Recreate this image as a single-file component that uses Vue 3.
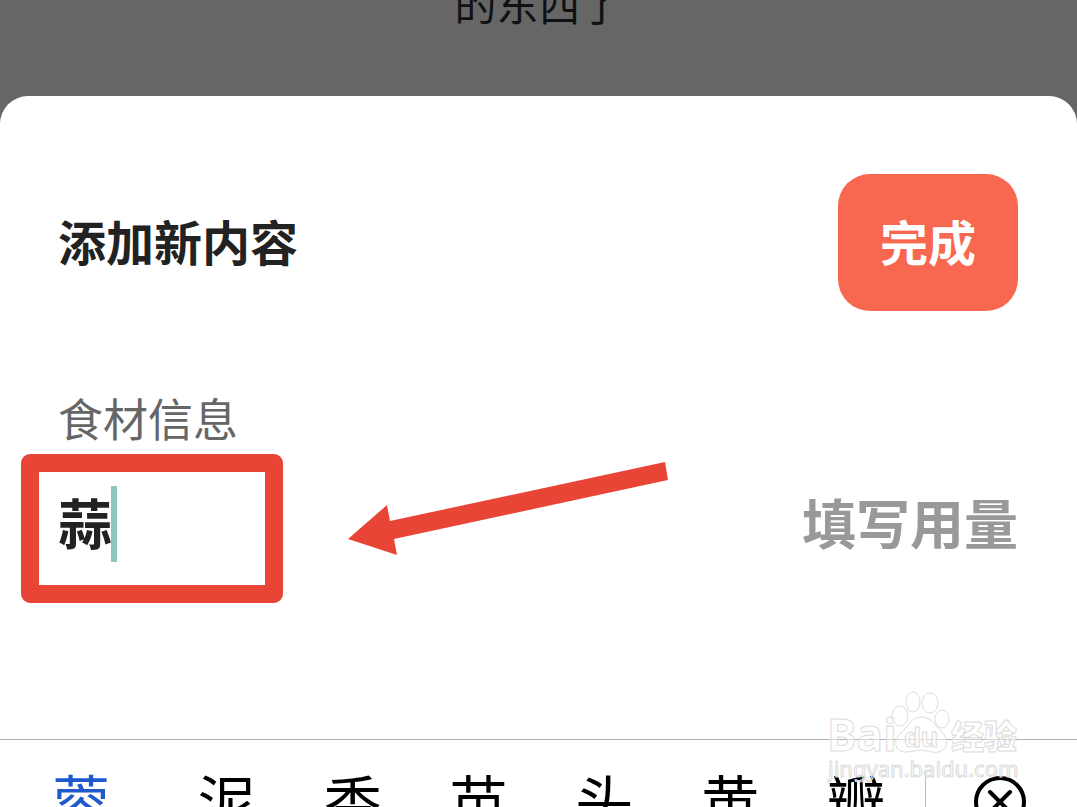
<script setup>
import { ref } from 'vue'

const ingredient = ref('蒜')
const amount = ref('')
const candidates = ['蓉', '泥', '香', '苗', '头', '黄', '瓣']
</script>

<template>
  <div class="screen">
    <p class="backdrop-text">的东西了</p>

    <main class="sheet">
      <header class="sheet-head">
        <h1>添加新内容</h1>
        <button type="button" class="done">完成</button>
      </header>

      <form class="fields" @submit.prevent>
        <label class="caption" for="ingredient">食材信息</label>
        <div class="field-row">
          <div class="ingredient">
            <input id="ingredient" v-model="ingredient" type="text" autocomplete="off" />
            <span class="caret"></span>
            <span class="marker"></span>
            <svg class="arrow" viewBox="0 0 320 94" aria-hidden="true">
              <path d="M0 77 39 43 42 59 317 0 320 18 46 77 49 93Z" fill="#e94537" />
            </svg>
          </div>
          <input v-model="amount" class="amount" type="text" placeholder="填写用量" aria-label="填写用量" />
        </div>
      </form>
    </main>

    <section class="candidates">
      <div class="words">
        <button v-for="(word, i) in candidates" :key="word" type="button" class="word" :class="{ active: i === 0 }">
          {{ word }}
        </button>
      </div>
      <button type="button" class="clear" aria-label="清除">
        <svg viewBox="0 0 52 52" aria-hidden="true">
          <circle cx="26" cy="26" r="24" />
          <path d="M16 16 36 36M36 16 16 36" />
        </svg>
      </button>
    </section>

    <svg class="watermark" viewBox="0 0 200 96" aria-hidden="true">
      <g class="wm-shape">
        <ellipse cx="73" cy="25" rx="8" ry="10" />
        <ellipse cx="86" cy="11" rx="7" ry="10" />
        <ellipse cx="103" cy="12" rx="8" ry="10" />
        <ellipse cx="115" cy="28" rx="7" ry="9" />
        <path d="M94 26C84 26 82 35 76 40C66 48 66 60 78 61C85 61 89 59 95 59C102 60 108 63 114 60C123 56 120 46 114 40C107 34 105 26 94 26Z" />
      </g>
      <text x="0" y="60" class="wm-brand">Bai</text>
      <text x="77" y="56" class="wm-du">du</text>
      <text x="124" y="58" class="wm-cjk">经验</text>
      <text x="1" y="86" class="wm-url">jingyan.baidu.com</text>
    </svg>
  </div>
</template>

<style>
body {
  margin: 0;
}
</style>

<style scoped>
* {
  box-sizing: border-box;
}

.screen {
  position: relative;
  display: flex;
  flex-direction: column;
  height: 100vh;
  overflow: hidden;
  background: #666;
  color: #222;
  font-family: "Noto Sans CJK SC", sans-serif;
}

.backdrop-text {
  flex: none;
  display: flex;
  align-items: center;
  justify-content: center;
  height: 6px;
  margin: 0 0 90px;
  color: #111;
  font-size: 42px;
  line-height: 6px;
}

button,
input {
  margin: 0;
  padding: 0;
  border: 0;
  background: none;
  color: inherit;
  font-family: inherit;
  outline: none;
}

.sheet {
  flex: 1 0 auto;
  padding: 78px 59px 0 58px;
  border-radius: 28px 28px 0 0;
  background: #fff;
}

.sheet-head {
  display: flex;
  align-items: center;
  justify-content: space-between;
}

h1 {
  margin: 0;
  padding-bottom: 6px;
  font-size: 48px;
  line-height: 72px;
  font-weight: 700;
}

.done {
  width: 180px;
  height: 137px;
  padding-bottom: 6px;
  border-radius: 32px;
  background: #f8674f;
  color: #fff;
  font-size: 48px;
  font-weight: 700;
}

.fields {
  margin-top: 74px;
}

.caption {
  display: block;
  color: #666;
  font-size: 45px;
  line-height: 66px;
}

.field-row {
  display: flex;
  align-items: center;
  justify-content: space-between;
  margin-top: 35px;
}

.ingredient {
  position: relative;
  width: 206px;
}

.field-row input {
  display: block;
  width: 100%;
  height: 76px;
  padding-bottom: 6px;
  font-size: 54px;
  font-weight: 700;
}

.field-row .amount {
  width: 216px;
}

.amount::placeholder {
  color: #999;
  opacity: 1;
}

.caret {
  position: absolute;
  top: 0;
  left: 53px;
  width: 6px;
  height: 76px;
  background: #8dc6bd;
}

.marker {
  position: absolute;
  top: -32px;
  left: -37px;
  width: 262px;
  height: 149px;
  border: 18px solid #e94537;
  border-radius: 9px;
  pointer-events: none;
}

.arrow {
  position: absolute;
  top: -24px;
  left: 290px;
  width: 320px;
  height: 94px;
}

.candidates {
  flex: none;
  display: flex;
  align-items: flex-start;
  height: 68px;
  padding-top: 24px;
  border-top: 1px solid #b0b0b0;
  background: #fff;
  color: #000;
}

.words {
  flex: 1;
  display: flex;
  justify-content: space-between;
  padding: 0 40px 0 52px;
}

.word {
  width: 58px;
  font-size: 58px;
  line-height: 70px;
  font-weight: 400;
}

.word.active {
  margin-right: 20px;
  color: #2059cc;
}

.clear {
  width: 152px;
  margin-top: 6px;
  padding: 6px 0 0 48px;
  border-left: 1px solid #bbb;
}

.clear svg {
  display: block;
  width: 52px;
  height: 52px;
  fill: none;
  stroke: #000;
  stroke-width: 4;
  stroke-linecap: round;
}

.watermark {
  position: absolute;
  right: 50px;
  bottom: 20px;
  width: 200px;
  height: 96px;
  pointer-events: none;
}

.wm-shape,
.watermark text {
  fill: #fff;
  fill-opacity: 0.5;
  stroke: #dcdcdc;
  stroke-width: 1;
  stroke-linejoin: round;
}

.watermark text {
  font-family: "Liberation Sans", Arial, sans-serif;
  font-weight: 700;
}

.watermark .wm-brand {
  font-family: "Open Sans", sans-serif;
  font-size: 44px;
}

.watermark .wm-du {
  font-size: 28px;
}

.watermark .wm-cjk {
  font-family: "Noto Sans CJK SC", sans-serif;
  font-size: 33px;
  font-weight: 900;
}

.watermark .wm-url {
  font-family: "Noto Sans", sans-serif;
  font-size: 22px;
  font-weight: 400;
}
</style>
